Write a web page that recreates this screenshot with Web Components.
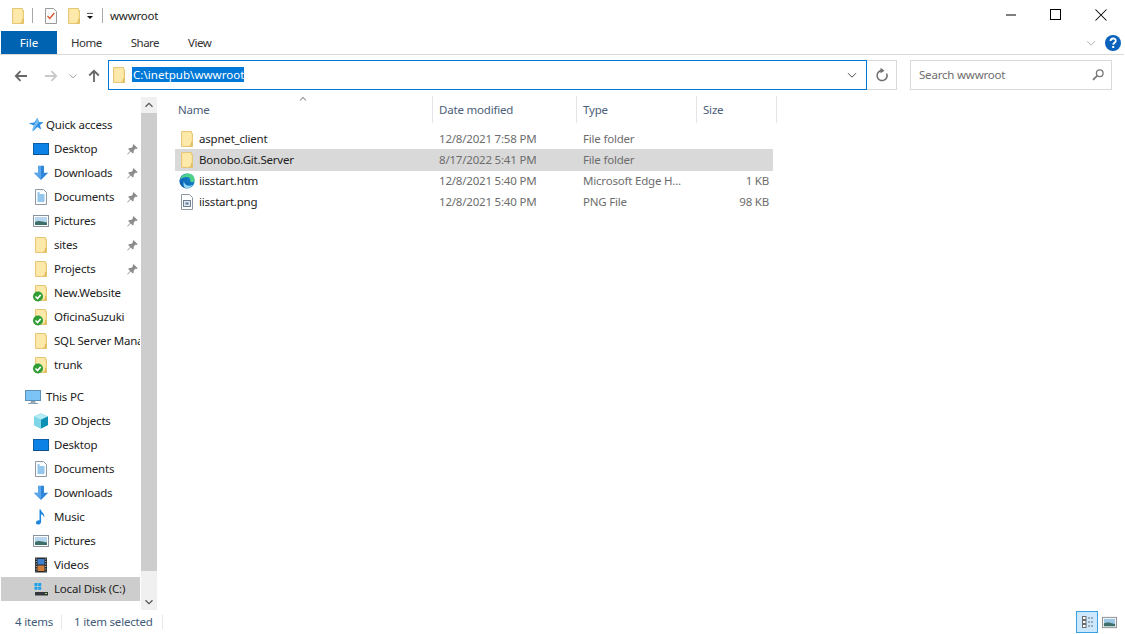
<!DOCTYPE html>
<html lang="en"><head><meta charset="utf-8"><title>wwwroot</title>
<style>
html,body{margin:0;padding:0;background:#fff}
body{font:11.5px "Noto Sans","Open Sans",sans-serif;color:#222}
</style></head><body>
<explorer-window></explorer-window>
<script>
const FOLDER=`<path d="M2.5 .5h10v2h1v13h-11z" fill="#fce39a" stroke="#e6c777" stroke-width="1"/><path d="M12.5 10.5l1 1v4h-3.5z" fill="#e2bd62"/><path d="M3.500 1.5h8.500v13h-8.500z" fill="#fdeeb8" opacity=".6"/>`;
const CHECK=`<circle cx="5" cy="11.500" r="5" fill="#2f9e36"/><path d="M2.500 11.500l2 2 3.200-3.600" fill="none" stroke="#fff" stroke-width="1.600"/>`;
const ICONS={
 folder:FOLDER,
 synced:FOLDER+CHECK,
 star:`<path d="M9.500 .8l1.500 4.300 4.600.2-3.600 2.800 1.200 4.500-3.900-2.500-4.500 4.300 1.600-5.600L.7 6.200l5.600-.7z" fill="#2c8fe3"/><path d="M9.500 1l1.400 4.200-3 4.200-4.300 5.400 2-6z" fill="#74bdf2"/>`,
 desktop:`<rect x=".5" y="2.500" width="15" height="11" fill="#0c82e6" stroke="#0a5fa8"/><path d="M1 13.500h14" stroke="#1b3f63" stroke-dasharray="1 1"/>`,
 down:`<path d="M5 .8h6v7h4.200L8 15 .8 7.800H5z" fill="#2f86d8"/><path d="M5 1h3v13L1.500 8H5z" fill="#5aa6ec"/>`,
 doc:`<path d="M2.500 .5h8l3 3v12h-11z" fill="#fbfdff" stroke="#8d98a3"/><path d="M4.500 4h2M4.500 6h7M4.500 8h7M4.500 10h7M4.500 12h7" stroke="#2f8fd8"/>`,
 pic:`<rect x=".5" y="2.500" width="15" height="11" fill="#fff" stroke="#87929b"/><rect x="2" y="4" width="12" height="8" fill="#b8d7ef"/><path d="M2 9c3-2 6-1 12 .5V12H2z" fill="#3e6f68"/>`,
 pc:`<rect x=".5" y="1.500" width="15" height="10" fill="#7cc4f5" stroke="#5b8fb3"/><path d="M6 12.500h4v1.500H6zM3 14.500h10" stroke="#8da3b3" fill="#a9bccb"/>`,
 cube:`<path d="M8 .5L15 3.500v8.500L8 15.500 1 12V3.500z" fill="#2bb6d3"/><path d="M1 3.500L8 6.800v8.700L1 12z" fill="#7ed6e6"/><path d="M8 .5L15 3.500 8 6.800 1 3.500z" fill="#b6ecf4"/><path d="M8 6.800L15 3.500V12l-7 3.500z" fill="#0e8fb4"/>`,
 music:`<path d="M6.500 .5h1.300c.4 3 4.500 4 3.400 8-.4-2-2.200-3-3.100-3.200V13c0 1.500-1.500 2.600-3 2.600S3 14.600 3 13.400s1.700-2.400 3.500-2z" fill="#1f86e0"/>`,
 video:`<rect x="2" y=".5" width="12" height="15" fill="#26282c"/><rect x="4.500" y="2" width="7" height="5.500" fill="#3f7fd0"/><rect x="4.500" y="8.500" width="7" height="5.500" fill="#d0803a"/><path d="M3.200 1.500v13M12.800 1.500v13" stroke="#d8d8d8" stroke-dasharray="1 1.500"/>`,
 disk:`<path d="M1.500 2h3v3h-3zM5.200 2h3v3h-3zM1.500 5.700h3v3h-3zM5.200 5.700h3v3h-3z" fill="#18a0e8"/><rect x="2" y="11" width="13" height="3.500" fill="#33373b"/><rect x="12" y="12" width="2" height="1" fill="#8fe05c"/>`,
 edge:`<defs><linearGradient id="e1" x1="0" y1="1" x2="1" y2="0"><stop offset="0" stop-color="#0a56a8"/><stop offset="1" stop-color="#1790d8"/></linearGradient></defs><circle cx="8" cy="8" r="7.600" fill="url(#e1)"/><path d="M1 6.500C2.500 1.500 8-.8 12 1c2.500 1.200 4 3.600 3.500 6.800-.2 1.400-3 1.800-4.200.8 .6-3-1.600-5-4-4.600C5 4.300 3 5 1 6.500z" fill="#4ed08a"/><path d="M5 8c0 3.500 3.600 6 9 3.800-1.500 2.600-4 3.700-6.200 3.600C4.300 15 4 11 5 8z" fill="#8fd5f5"/>`,
 png:`<path d="M2.500 .5h8l3 3v12h-11z" fill="#fff" stroke="#8d98a3"/><rect x="4.500" y="6.500" width="7" height="6" fill="#dfe8f0" stroke="#6f7f90"/><rect x="6.500" y="8.500" width="3" height="2" fill="#59799a"/>`,
 pin:`<path d="M10 1.500l4.500 4.500-1.200 .8-1-.4-2.300 2.300-.2 2.300-1 1-2.200-2.200L3 13.200l-.5-.5 3.400-3.700L3.700 6.800l1-1 2.300-.2 2.300-2.300-.4-1z" fill="#8d8d8d"/>`,
 taskdoc:`<path d="M2.500 .5h8l3 3v12h-11z" fill="#fbfbfb" stroke="#9b9b9b"/><path d="M4.500 8l2.300 2.500 4.500-5.500" fill="none" stroke="#d9552b" stroke-width="1.300"/>`,
 back:`<path d="M14 8H3M7.500 3.200 2.800 8l4.700 4.800" fill="none" stroke="currentColor" stroke-width="1.800"/>`,
 fwd:`<path d="M2 8h11M8.500 3.200 13.200 8l-4.700 4.800" fill="none" stroke="currentColor" stroke-width="1.800"/>`,
 up:`<path d="M8 14V3M3.200 7.500 8 2.800l4.800 4.700" fill="none" stroke="currentColor" stroke-width="1.800"/>`,
 chev:`<path d="M3.500 6 8 10.500 12.500 6" fill="none" stroke="currentColor" stroke-width="1.100"/>`,
 caretUp:`<path d="M4 10 8 6l4 4" fill="none" stroke="currentColor" stroke-width="1.400"/>`,
 caretDn:`<path d="M4 6l4 4 4-4" fill="none" stroke="currentColor" stroke-width="1.400"/>`,
 refresh:`<path d="M12.600 6.500A5 5 0 1 1 7.800 3.600" fill="none" stroke="currentColor" stroke-width="1.500"/><path d="M6.500 .8 10.500 3.700 6.500 6.300z" fill="currentColor"/>`,
 search:`<circle cx="10" cy="6" r="3.800" fill="none" stroke="currentColor" stroke-width="1.500"/><path d="M7.200 8.800 2.300 13.700" stroke="currentColor" stroke-width="2"/>`,
 qat:`<path d="M4 4.500h8" stroke="#111"/><path d="M4 8h8l-4 4z" fill="#111"/>`,
 min:`<path d="M3 8h10" stroke="#000"/>`,
 max:`<rect x="2.500" y="2.500" width="10" height="10" fill="none" stroke="#000"/>`,
 close:`<path d="M2.500 2.500l11 11M13.500 2.500l-11 11" stroke="#000" stroke-width="1.050"/>`,
 help:`<circle cx="8" cy="8" r="8" fill="#0a62bd"/><path d="M5.500 6c0-3.300 5.300-3.300 5.300-.3 0 2-2.600 2-2.600 4" fill="none" stroke="#fff" stroke-width="1.800"/><rect x="7.200" y="11" width="2" height="2" fill="#fff"/>`,
 details:`<rect x="3.500" y="2.500" width="3.500" height="3" fill="#fff" stroke="#6b6b6b"/><rect x="3.500" y="6.500" width="3.500" height="3" fill="#fff" stroke="#6b6b6b"/><rect x="3.500" y="10.500" width="3.500" height="3" fill="#fff" stroke="#6b6b6b"/><path d="M9 4h2M12 4h2M9 8h2M12 8h2M9 12h2M12 12h2" stroke="#6b6b6b"/>`,
 thumb:`<rect x=".5" y="2.500" width="15" height="11" fill="#fff" stroke="#8c8c8c"/><rect x="2" y="4" width="12" height="8" fill="#9cc7e6"/><path d="M2 9c3-2 6-1 12 .5V12H2z" fill="#3e6f68"/>`
};
function define(name,css,html){
 customElements.define(name,class extends HTMLElement{
  constructor(){super();this.attachShadow({mode:"open"});}
  connectedCallback(){if(this.shadowRoot.firstChild)return;this.shadowRoot.innerHTML=`<style>${css}</style>${typeof html==="function"?html(this):html}`;}
 });
}
customElements.define("win-icon",class extends HTMLElement{
 connectedCallback(){
  if(this.shadowRoot)return;
  const s=this.getAttribute("size")||16;
  const r=this.attachShadow({mode:"open"});
  r.innerHTML=`<style>:host{display:block;width:${s}px;height:${s}px;flex:none}svg{display:block;width:100%;height:100%;overflow:visible}</style><svg viewBox="0 0 16 16" aria-hidden="true">${ICONS[this.getAttribute("name")]||""}</svg>`;
 }
});
define("title-bar",`:host{display:flex;align-items:center;height:31px;position:relative;color:#111}
 .sep{width:1px;height:15px;background:#a8a8a8}
 .t{margin-left:7px;font-size:11.5px;letter-spacing:-.2px;color:#222}
 .ctl{margin-left:auto;display:flex;margin-right:2px}
 .ctl div{width:45px;height:31px;display:flex;align-items:center;justify-content:center}
 .ctl win-icon{position:relative;top:-1px}
`,`<win-icon name="folder" style="margin-left:10px"></win-icon><span class="sep" style="margin-left:6px"></span>
 <win-icon name="taskdoc" style="margin-left:10px"></win-icon><win-icon name="folder" style="margin-left:7px"></win-icon>
 <win-icon name="qat" size="12" style="margin-left:2px"></win-icon><span class="sep" style="margin-left:6px"></span>
 <span class="t">wwwroot</span>
 <div class="ctl"><div><win-icon name="min" size="16"></win-icon></div><div><win-icon name="max" size="16"></win-icon></div><div><win-icon name="close" size="16"></win-icon></div></div>`);
define("ribbon-tabs",`:host{display:flex;align-items:stretch;height:23px;border-bottom:1px solid #dadada;padding-left:1px;font-size:11.5px;margin-right:1px}
 .f{width:56px;background:#0063b1;color:#fff;display:flex;align-items:center;justify-content:center}
 .tab{display:flex;align-items:center;color:#333;letter-spacing:-.5px}
 .r{margin-left:auto;display:flex;align-items:center;gap:7px;padding-right:3px}
 .r .c{color:#aeaeae}
`,`<div class="f">File</div><div class="tab" style="margin-left:14px">Home</div><div class="tab" style="margin-left:29px">Share</div><div class="tab" style="margin-left:29px">View</div>
 <div class="r"><win-icon class="c" name="chev" size="14"></win-icon><win-icon name="help" size="16"></win-icon></div>`);
define("address-row",`:host{display:flex;align-items:center;height:41px;font-size:11.5px}
 .n{display:flex;align-items:center}
 .box{display:flex;align-items:center;height:30px;box-sizing:border-box;position:relative;top:-1px}
 .addr{margin-left:6px;width:759px;border:1px solid #0078d7;padding-left:2px}
 .sel{margin-left:5px;background:#0078d7;color:#fff;height:15px;line-height:15px;letter-spacing:.05px;padding:0 0 0 1px}
 .ref{width:30px;border:1px solid #d9d9d9;border-left:0;justify-content:center;color:#6d6d6d;padding-left:1px}
 .search{margin-left:13px;width:202px;border:1px solid #d9d9d9;padding:0 6px 0 8px;color:#6d6d6d;justify-content:space-between;letter-spacing:-.2px}
`,`<div class="n" style="margin-left:13px;color:#666"><win-icon name="back"></win-icon></div>
 <div class="n" style="margin-left:14px;color:#c8c8c8"><win-icon name="fwd"></win-icon></div>
 <div class="n" style="margin-left:8px;color:#8a8a8a"><win-icon name="chev" size="12"></win-icon></div>
 <div class="n" style="margin-left:7px;color:#666"><win-icon name="up"></win-icon></div>
 <div class="box addr"><win-icon name="folder"></win-icon><span class="sel">C:\\inetpub\\wwwroot</span><win-icon name="chev" size="14" style="margin-left:auto;margin-right:7px;color:#444"></win-icon></div>
 <div class="box ref"><win-icon name="refresh"></win-icon></div>
 <div class="box search"><span>Search wwwroot</span><win-icon name="search" size="14" style="color:#777"></win-icon></div>`);
define("nav-item",`:host{display:flex;align-items:center;height:24px;font-size:11.5px;color:#222;overflow:hidden;white-space:nowrap;position:relative;letter-spacing:-.2px}
 :host([sel]){background:#cdcdcd}
 win-icon.i{margin-left:var(--ind,32px)}
 .l{margin-left:var(--lg,5px);padding-bottom:2px}
 .p{position:absolute;right:1px;top:6px}
`,h=>`<win-icon class="i" name="${h.getAttribute("icon")}"></win-icon><span class="l"><slot></slot></span>${h.hasAttribute("pin")?'<win-icon class="p" name="pin" size="14"></win-icon>':''}`);
define("scroll-bar",`:host{display:flex;flex-direction:column;width:16px;background:#f0f0f0;color:#555}
 .b{height:16px;flex:none;display:flex;align-items:center;justify-content:center}
 .t{height:458px;background:#cdcdcd;flex:none}
 .s{flex:1}
`,`<div class="b"><win-icon name="caretUp" size="14"></win-icon></div><div class="t"></div><div class="s"></div><div class="b"><win-icon name="caretDn" size="14"></win-icon></div>`);
define("nav-pane",`:host{display:flex;width:157px;flex:none;box-sizing:border-box}
 .list{width:139px;margin:0 1px;padding-top:17px;box-sizing:border-box;overflow:hidden}
 scroll-bar{margin-top:1px}
`,`<div class="list"><slot></slot></div><scroll-bar></scroll-bar>`);
define("col-header",`:host{display:grid;grid-template-columns:261px 144px 120px 80px;margin-left:15px;height:27px;color:#4c607a;font-size:11.5px;letter-spacing:-.2px;position:relative;width:605px}
 div{display:flex;align-items:center;padding-left:6px;box-sizing:border-box;border-right:1px solid #e5e5e5;padding-bottom:1px}
 .caret{position:absolute;left:125px;top:-3px;color:#888}
`,`<div>Name</div><div>Date modified</div><div>Type</div><div>Size</div><win-icon class="caret" name="caretUp" size="12"></win-icon>`);
define("file-row",`:host{display:grid;grid-template-columns:258px 144px 120px 76px;height:21px;align-items:center;font-size:11.5px;margin-left:18px;width:598px;color:#6d6d6d;letter-spacing:-.2px;white-space:nowrap}
 :host([sel]){background:#d9d9d9;height:22px;margin-bottom:-1px;position:relative}
 :host([sel]) span,:host([sel]) .d,:host([sel]) .ty{padding-bottom:1px}
 .n{display:flex;align-items:center;padding-left:4px;color:#222}
 .n span{margin-left:4px}
 .d,.ty{padding-left:6px}
 .s{text-align:right;padding-right:4px}
`,h=>`<div class="n"><win-icon name="${h.getAttribute("icon")}"></win-icon><span>${h.getAttribute("label")}</span></div><div class="d">${h.getAttribute("date")}</div><div class="ty">${h.getAttribute("type")}</div><div class="s">${h.getAttribute("fsize")||""}</div>`);
define("file-pane",`:host{flex:1;display:block;min-width:0}
 .rows{padding-top:5px}
`,`<col-header></col-header><div class="rows"><slot></slot></div>`);
define("status-bar",`:host{display:flex;align-items:center;height:24px;font-size:11.5px;color:#3f5a78;letter-spacing:-.2px;position:relative}
 .tx{padding-bottom:2px}
 .sep{width:1px;height:14px;background:#e6e6e6}
 .v{height:22px;box-sizing:border-box;display:flex;align-items:center;justify-content:center}
 .on{width:22px;background:#cce8ff;border:1px solid #3aa0e0;margin-left:auto}
`,`<span class="tx" style="margin-left:15px">4 items</span><span class="sep" style="margin-left:8px"></span><span class="tx" style="margin-left:12px">1 item selected</span><span class="sep" style="margin-left:9px"></span>
 <div class="v on"><win-icon name="details"></win-icon></div><div class="v" style="width:16px;margin-left:3px;margin-right:8px"><win-icon name="thumb" size="15"></win-icon></div>`);
define("explorer-window",`:host{display:flex;flex-direction:column;width:1125px;height:634px;overflow:hidden;background:#fff}
 .main{flex:1;display:flex;min-height:0}
`,`<title-bar></title-bar><ribbon-tabs></ribbon-tabs><address-row></address-row>
 <div class="main"><nav-pane>
  <nav-item icon="star" style="--ind:27px;--lg:2px">Quick access</nav-item>
  <nav-item icon="desktop" pin>Desktop</nav-item>
  <nav-item icon="down" pin>Downloads</nav-item>
  <nav-item icon="doc" pin>Documents</nav-item>
  <nav-item icon="pic" pin>Pictures</nav-item>
  <nav-item icon="folder" pin>sites</nav-item>
  <nav-item icon="folder" pin>Projects</nav-item>
  <nav-item icon="synced">New.Website</nav-item>
  <nav-item icon="synced">OficinaSuzuki</nav-item>
  <nav-item icon="folder">SQL Server Mana</nav-item>
  <nav-item icon="synced">trunk</nav-item>
  <div style="height:8px"></div>
  <nav-item icon="pc" style="--ind:24px">This PC</nav-item>
  <nav-item icon="cube">3D Objects</nav-item>
  <nav-item icon="desktop">Desktop</nav-item>
  <nav-item icon="doc">Documents</nav-item>
  <nav-item icon="down">Downloads</nav-item>
  <nav-item icon="music">Music</nav-item>
  <nav-item icon="pic">Pictures</nav-item>
  <nav-item icon="video">Videos</nav-item>
  <nav-item icon="disk" sel>Local Disk (C:)</nav-item>
 </nav-pane>
 <file-pane>
  <file-row icon="folder" label="aspnet_client" date="12/8/2021 7:58 PM" type="File folder"></file-row>
  <file-row icon="folder" label="Bonobo.Git.Server" date="8/17/2022 5:41 PM" type="File folder" sel></file-row>
  <file-row icon="edge" label="iisstart.htm" date="12/8/2021 5:40 PM" type="Microsoft Edge H..." fsize="1 KB"></file-row>
  <file-row icon="png" label="iisstart.png" date="12/8/2021 5:40 PM" type="PNG File" fsize="98 KB"></file-row>
 </file-pane></div>
 <status-bar></status-bar>`);
</script>
</body></html>
